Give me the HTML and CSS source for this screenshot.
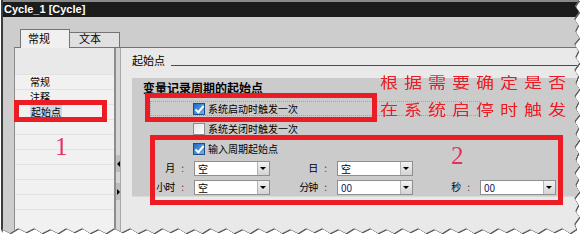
FILE: index.html
```html
<!DOCTYPE html>
<html lang="zh-CN">
  <head>
    <meta charset="UTF-8" />
    <title>Cycle_1 [Cycle]</title>
    <link rel="stylesheet" href="styles.css">
  </head>
  <body>
    <div class="sheet">
      <div class="window">
        <div class="titlebar">Cycle_1 [Cycle]</div>

        <div class="tabstrip">
          <div class="tab active">常规</div>
          <div class="tab">文本</div>
        </div>

        <div class="body">
          <div class="panel">
            <div class="nav">
              <div class="nav-top"></div>
              <div class="nav-item">常规</div>
              <div class="nav-item">注释</div>
              <div class="nav-item selected"><span>起始点</span></div>
              <div class="nav-item"></div>
              <div class="nav-item"></div>
              <div class="nav-item"></div>
              <div class="nav-item"></div>
              <div class="nav-item"></div>
              <div class="nav-item"></div>
              <div class="nav-item"></div>
            </div>

            <div class="splitter">
              <div class="split-btn to-left"></div>
              <div class="split-btn to-right"></div>
            </div>

            <div class="pane">
              <div class="pane-head">
                <span>起始点</span>
                <span class="rule"></span>
              </div>

              <div class="group">
                <div class="group-title">变量记录周期的起始点</div>
                <div class="check-row focused"><span class="checkbox checked"></span>系统启动时触发一次</div>
                <div class="check-row"><span class="checkbox"></span>系统关闭时触发一次</div>
                <div class="check-row"><span class="checkbox checked"></span>输入周期起始点</div>

                <div class="fields">
                  <div class="field-label">月<span class="colon">:</span></div>
                  <div class="combo"><span class="value">空</span><span class="drop"></span></div>
                  <div class="field-label">日<span class="colon">:</span></div>
                  <div class="combo"><span class="value">空</span><span class="drop"></span></div>
                  <div></div>
                  <div></div>

                  <div class="field-label">小时<span class="colon">:</span></div>
                  <div class="combo"><span class="value">空</span><span class="drop"></span></div>
                  <div class="field-label">分钟<span class="colon">:</span></div>
                  <div class="combo"><span class="value num-value">00</span><span class="drop"></span></div>
                  <div class="field-label">秒<span class="colon">:</span></div>
                  <div class="combo"><span class="value num-value">00</span><span class="drop"></span></div>
                </div>
              </div>
            </div>
          </div>
        </div>

        <!-- annotations drawn over the screenshot -->
        <div class="mark mark-nav"></div>
        <div class="mark mark-start"></div>
        <div class="mark mark-fields"></div>
        <div class="note">根据需要确定是否<br>在系统启停时触发</div>
        <div class="num num-1">1</div>
        <div class="num num-2">2</div>
      </div>
    </div>
  </body>
</html>
```

FILE: styles.css
```css
* {
  margin: 0;
  padding: 0;
  box-sizing: border-box;
}

body {
  background: #ffffff;
  font-family: "Noto Sans CJK SC", "Noto Sans", sans-serif;
  font-size: 10px;
  color: #000;
}

.sheet {
  filter: drop-shadow(1px 1px 0 rgba(40, 40, 40, 0.75));
}

.window {
  position: relative;
  width: 578px;
  height: 234px;
  margin-left: 1px;
  border-left: 2px solid #3c3c3c;
  background: #cdcdcd;
  overflow: hidden;
  clip-path: polygon(0 0, 578px 0, 574px 6px, 578px 12px, 573px 19px, 577px 25px, 574px 31px, 578px 38px, 573px 44px, 577px 51px, 574px 57px, 578px 63px, 573px 70px, 577px 76px, 574px 83px, 578px 89px, 573px 96px, 577px 102px, 574px 108px, 578px 115px, 573px 121px, 577px 128px, 574px 134px, 578px 140px, 573px 147px, 577px 153px, 574px 160px, 578px 166px, 573px 173px, 577px 179px, 574px 185px, 578px 192px, 573px 198px, 577px 205px, 574px 211px, 578px 217px, 573px 224px, 575px 229px,
    569px 233px, 561px 228px, 553px 232px, 545px 228px, 537px 233px, 529px 229px, 521px 233px, 513px 228px, 505px 232px, 497px 228px, 489px 233px, 481px 229px, 473px 233px, 465px 228px, 457px 232px, 449px 228px, 441px 233px, 433px 229px, 425px 233px, 417px 228px, 409px 232px, 401px 228px, 393px 233px, 385px 229px, 377px 233px, 369px 228px, 361px 232px, 353px 228px, 345px 233px, 337px 229px, 329px 233px, 321px 228px, 313px 232px, 305px 228px, 297px 233px, 289px 229px, 281px 233px, 273px 228px, 265px 232px, 257px 228px, 249px 233px, 241px 229px, 233px 233px, 225px 228px, 217px 232px, 209px 228px, 201px 233px, 193px 229px, 185px 233px, 177px 228px, 169px 232px, 161px 228px, 153px 233px, 145px 229px, 137px 233px, 129px 228px, 121px 232px, 113px 228px, 105px 233px, 97px 229px, 89px 233px, 81px 228px, 73px 232px, 65px 228px, 57px 233px, 49px 229px, 41px 233px, 33px 228px, 25px 232px, 17px 228px, 9px 233px, 1px 229px, 0 232px);
}

/* title bar */

.titlebar {
  height: 17px;
  border-top: 2px solid #8a8a8a;
  background: #1c1c1c;
  color: #ffffff;
  font-family: "Liberation Sans", Arial, sans-serif;
  font-weight: bold;
  font-size: 11px;
  line-height: 15px;
  padding-left: 1px;
}

/* tabs */

.tabstrip {
  display: flex;
  align-items: flex-end;
  height: 30px;
  padding-left: 17px;
  background: #cdcdcd;
}

.tab {
  width: 50px;
  height: 15px;
  border: 1px solid #747474;
  border-bottom: none;
  border-left: none;
  background: #e0e0e0;
  font-size: 11px;
  line-height: 10px;
  padding-left: 9px;
}

.tab.active {
  position: relative;
  z-index: 1;
  height: 19px;
  margin-bottom: -1px;
  border-left: 1px solid #747474;
  background: #f0f0f0;
  line-height: 14px;
  padding-top: 1px;
  padding-left: 7px;
}

/* main area */

.body {
  height: 187px;
  padding-left: 11px;
  background: #cdcdcd;
}

.panel {
  display: flex;
  height: 100%;
  border-top: 1px solid #747474;
  border-left: 1px solid #8c8c8c;
}

.nav {
  width: 99px;
  background: #f1f1f1;
}

.nav-top {
  height: 26px;
  background: #e9e9e9;
}

.nav-item {
  height: 15px;
  border-top: 1px solid #e2e2e2;
  padding-left: 15px;
  line-height: 14px;
}

.nav-item.selected span {
  background: #cbd8e8;
  padding: 0 1px;
}

.splitter {
  display: flex;
  flex-direction: column;
  width: 7px;
  border-left: 2px solid #8c8c8c;
  border-right: 1px solid #a8a8a8;
  background: #d6d6d6;
}

.split-btn {
  position: relative;
  height: 17px;
  background: #bdbdbd;
}

.split-btn.to-left {
  margin-top: 107px;
}

.split-btn.to-right {
  margin-top: 11px;
}

.split-btn::after {
  content: "";
  position: absolute;
  top: 6px;
  left: 1px;
  border-top: 3px solid transparent;
  border-bottom: 3px solid transparent;
}

.split-btn.to-left::after {
  border-right: 3px solid #000;
}

.split-btn.to-right::after {
  border-left: 3px solid #000;
}

.pane {
  flex: 1;
  background: #e9e9e9;
}

.pane-head {
  display: flex;
  align-items: flex-start;
  padding: 5px 0 0 11px;
  font-size: 11px;
  line-height: 14px;
}

.rule {
  flex: 1;
  height: 13px;
  margin-left: 6px;
  border-bottom: 1px solid #4a4a4a;
}

/* grey option group */

.group {
  height: 119px;
  margin: 11px 0 0 11px;
  background: #cbcbcb;
  border-bottom: 1px solid #dadada;
}

.group-title {
  padding: 3px 0 0 11px;
  font-size: 12px;
  font-weight: bold;
  line-height: 14px;
}

.check-row {
  display: flex;
  align-items: center;
  gap: 3px;
  width: 330px;
  height: 15px;
  margin: 5px 0 0 18px;
  padding-left: 42px;
  border: 1px dotted transparent;
  line-height: 13px;
}

.check-row.focused {
  margin-top: 6px;
  border-color: #9aa3b8;
}

.check-row:last-of-type {
  margin-top: 4px;
}

.checkbox {
  position: relative;
  width: 12px;
  height: 12px;
  border: 1px solid #8e8e8e;
  background: linear-gradient(135deg, #e4e4e4 0%, #ffffff 100%);
}

.checkbox.checked {
  border-color: #1d4f86;
  background: linear-gradient(135deg, #1f6cc0 0%, #6fb2ec 100%);
}

.checkbox.checked::after {
  content: "";
  position: absolute;
  left: 3px;
  top: 0;
  width: 3px;
  height: 7px;
  border-right: 2px solid #ffffff;
  border-bottom: 2px solid #ffffff;
  transform: rotate(40deg);
}

.fields {
  display: grid;
  grid-template-columns: 62px 76px 67px 76px 67px 76px;
  grid-auto-rows: 15px;
  row-gap: 4px;
  margin-top: 5px;
}

.field-label {
  display: flex;
  justify-content: flex-end;
  padding-right: 11px;
  line-height: 14px;
  letter-spacing: -1px;
}

.colon {
  margin-left: 7px;
  color: #5a4a2a;
}

.combo {
  display: flex;
  height: 15px;
  border: 1px solid #8f8f8f;
  background: #ffffff;
}

.combo .value {
  flex: 1;
  padding-left: 3px;
  line-height: 13px;
}

.combo .num-value {
  color: #12245e;
}

.combo .drop {
  position: relative;
  width: 12px;
  border-left: 1px solid #b4b4b4;
  background: linear-gradient(#f2f2f2, #d4d4d4);
}

.combo .drop::after {
  content: "";
  position: absolute;
  left: 2px;
  top: 5px;
  border-left: 3px solid transparent;
  border-right: 3px solid transparent;
  border-top: 3px solid #000;
}

/* red annotations */

.mark {
  position: absolute;
  border: 5px solid #ec1c24;
}

.mark-nav {
  left: 11px;
  top: 100px;
  width: 93px;
  height: 22px;
}

.mark-start {
  left: 142px;
  top: 93px;
  width: 232px;
  height: 29px;
}

.mark-fields {
  left: 147px;
  top: 135px;
  width: 413px;
  height: 70px;
}

.note {
  position: absolute;
  left: 377px;
  top: 68px;
  font-size: 18px;
  line-height: 33px;
  letter-spacing: 6px;
  color: #ec1c24;
  white-space: nowrap;
  transform: scaleY(0.82);
  transform-origin: 0 0;
}

.num {
  position: absolute;
  font-family: "Liberation Serif", "Times New Roman", serif;
  font-size: 25px;
  line-height: 25px;
  color: #e63060;
}

.num-1 {
  left: 52px;
  top: 134px;
}

.num-2 {
  left: 448px;
  top: 143px;
}
```
